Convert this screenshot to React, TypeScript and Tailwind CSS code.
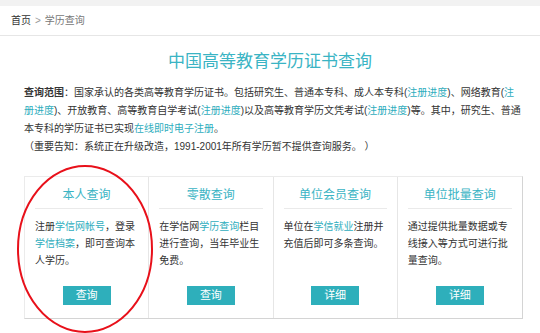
const FONT = '"Liberation Sans", "Noto Sans CJK SC", sans-serif';

interface Card {
  title: string;
  body: React.ReactNode;
  action: string;
}

const Link = ({ children }: { children: React.ReactNode }) => (
  <span className="text-[#2eadbd]">{children}</span>
);

const cards: Card[] = [
  {
    title: '本人查询',
    body: (
      <>
        注册<Link>学信网帐号</Link>，登录<Link>学信档案</Link>，即可查询本人学历。
      </>
    ),
    action: '查询',
  },
  {
    title: '零散查询',
    body: (
      <>
        在学信网<Link>学历查询</Link>栏目进行查询，当年毕业生免费。
      </>
    ),
    action: '查询',
  },
  {
    title: '单位会员查询',
    body: (
      <>
        单位在<Link>学信就业</Link>注册并充值后即可多条查询。
      </>
    ),
    action: '详细',
  },
  {
    title: '单位批量查询',
    body: <>通过提供批量数据或专线接入等方式可进行批量查询。</>,
    action: '详细',
  },
];

export default function App() {
  return (
    <div className="relative w-[540px] h-[333px] overflow-hidden bg-white text-[#333]" style={{ fontFamily: FONT }}>
      {/* ── top strip + breadcrumb ── */}
      <div className="h-[6px] bg-[#f2f2f2]" />
      <div className="h-[30px] flex items-center pl-[11px] text-[10px] border-b border-[#e6e6e6]">
        <span className="text-[#333]">首页</span>
        <span className="mx-[4px] text-[#999]">&gt;</span>
        <span className="text-[#777]">学历查询</span>
      </div>

      {/* ── title ── */}
      <h1 className="mt-[14px] text-center text-[17px] leading-[24px] text-[#3ab4c4] font-normal">
        中国高等教育学历证书查询
      </h1>

      {/* ── description ── */}
      <div className="mx-[24px] mt-[10px] text-[10px] leading-[18px] whitespace-nowrap">
        <p>
          <span className="font-bold">查询范围</span>：国家承认的各类高等教育学历证书。包括研究生、普通本专科、成人本专科(
          <Link>注册进度</Link>)、网络教育(<Link>注</Link>
          <br />
          <Link>册进度</Link>)、开放教育、高等教育自学考试(<Link>注册进度</Link>)以及高等教育学历文凭考试(
          <Link>注册进度</Link>)等。其中，研究生、普通
          <br />
          本专科的学历证书已实现<Link>在线即时电子注册</Link>。
        </p>
        <p>（重要告知：系统正在升级改造，1991-2001年所有学历暂不提供查询服务。 ）</p>
      </div>

      {/* ── cards ── */}
      <div className="mx-[24px] mt-[20px] w-[499px] h-[143px] grid grid-cols-4 border border-[#ebebeb] border-r-[#d4d4d4] border-b-[#d4d4d4]">
        {cards.map((c, i) => (
          <div
            key={c.title}
            className={`flex flex-col px-[10px] pt-[8px] pb-[13px] ${i < 3 ? 'border-r border-[#e6e6e6]' : ''}`}
          >
            <div className="text-center text-[12px] leading-[20px] text-[#3ab4c4]">{c.title}</div>
            <div className="mt-[3px] h-px bg-[#eaeaea]" />
            <p className="mt-[9px] flex-1 text-[10px] leading-[17px] text-[#333]">{c.body}</p>
            <button className="mx-auto w-[48px] h-[19px] bg-[#2eafbb] text-white text-[11px] leading-[19px]">
              {c.action}
            </button>
          </div>
        ))}
      </div>

      {/* ── red annotation ── */}
      <svg className="absolute left-0 top-0 pointer-events-none" width="540" height="333">
        <ellipse cx="85" cy="249" rx="67" ry="83" fill="none" stroke="#e8101a" strokeWidth="2" />
      </svg>
    </div>
  );
}
